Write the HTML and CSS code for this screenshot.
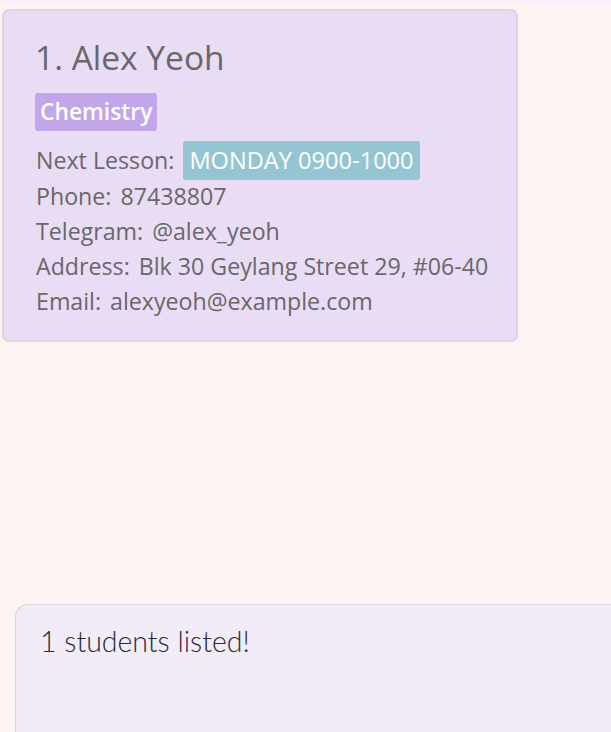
FILE: index.html
```html
<!DOCTYPE html>
<html>
<head>
<meta charset="utf-8">
<link rel="stylesheet" href="styles.css">
</head>
<body>
<div class="topstrip"></div>
<div class="list">
  <div class="card">
    <div class="name">1. Alex Yeoh</div>
    <div class="tags"><span class="tag subject">Chemistry</span></div>
    <div class="row lesson"><span>Next Lesson:</span><span class="tag time">MONDAY 0900-1000</span></div>
    <div class="row"><span>Phone:</span><span>87438807</span></div>
    <div class="row"><span>Telegram:</span><span>@alex_yeoh</span></div>
    <div class="row"><span>Address:</span><span>Blk 30 Geylang Street 29, #06-40</span></div>
    <div class="row"><span>Email:</span><span>alexyeoh@example.com</span></div>
  </div>
</div>
<div class="result">
  <div class="result-text">1 students listed!</div>
</div>
</body>
</html>
```
FILE: styles.css
```css
html, body {
  margin: 0;
  padding: 0;
  height: 100%;
  overflow: hidden;
}
body {
  display: flex;
  flex-direction: column;
  background: #fdf3f3;
  font-family: "Open Sans", "Noto Sans", sans-serif;
  color: #6b6669;
}
.topstrip {
  height: 3px;
  flex: none;
  background: #f4eef7;
}
.list {
  height: 601px;
  flex: none;
  padding: 6px 0 0 2px;
  box-sizing: border-box;
}
.card {
  width: 516px;
  box-sizing: border-box;
  background: #e8ddf5;
  border: 2px solid #dcd6e0;
  border-radius: 7px;
  padding: 24px 20px 21px 32px;
}
.name {
  font-size: 33.5px;
  line-height: 44px;
  margin-left: -1px;
}
.tags {
  display: flex;
  margin-top: 14px;
}
.tag {
  color: #fff;
  border-radius: 3px;
  padding: 0 6px;
}
.subject {
  background: #c3a6e9;
  font-weight: 600;
  font-size: 22.8px;
  line-height: 38px;
  margin-left: -1px;
  padding: 0 5px;
}
.row {
  display: flex;
  gap: 9px;
  font-size: 23.2px;
  line-height: 35px;
  white-space: nowrap;
}
.lesson {
  align-items: center;
  gap: 9px;
  margin-top: 10px;
  margin-bottom: -1px;
}
.time {
  background: #95c5d3;
  font-size: 23.6px;
  line-height: 39px;
}
.result {
  flex: 1;
  margin-left: 15px;
  background: #f2ecf8;
  border: 1px solid #d8d5da;
  border-right: none;
  border-bottom: none;
  border-radius: 13px 0 0 0;
  padding: 19px 24px;
}
.result-text {
  font-family: "Lato", sans-serif;
  font-weight: 300;
  font-size: 28.5px;
  color: #2b2a3a;
}
```
